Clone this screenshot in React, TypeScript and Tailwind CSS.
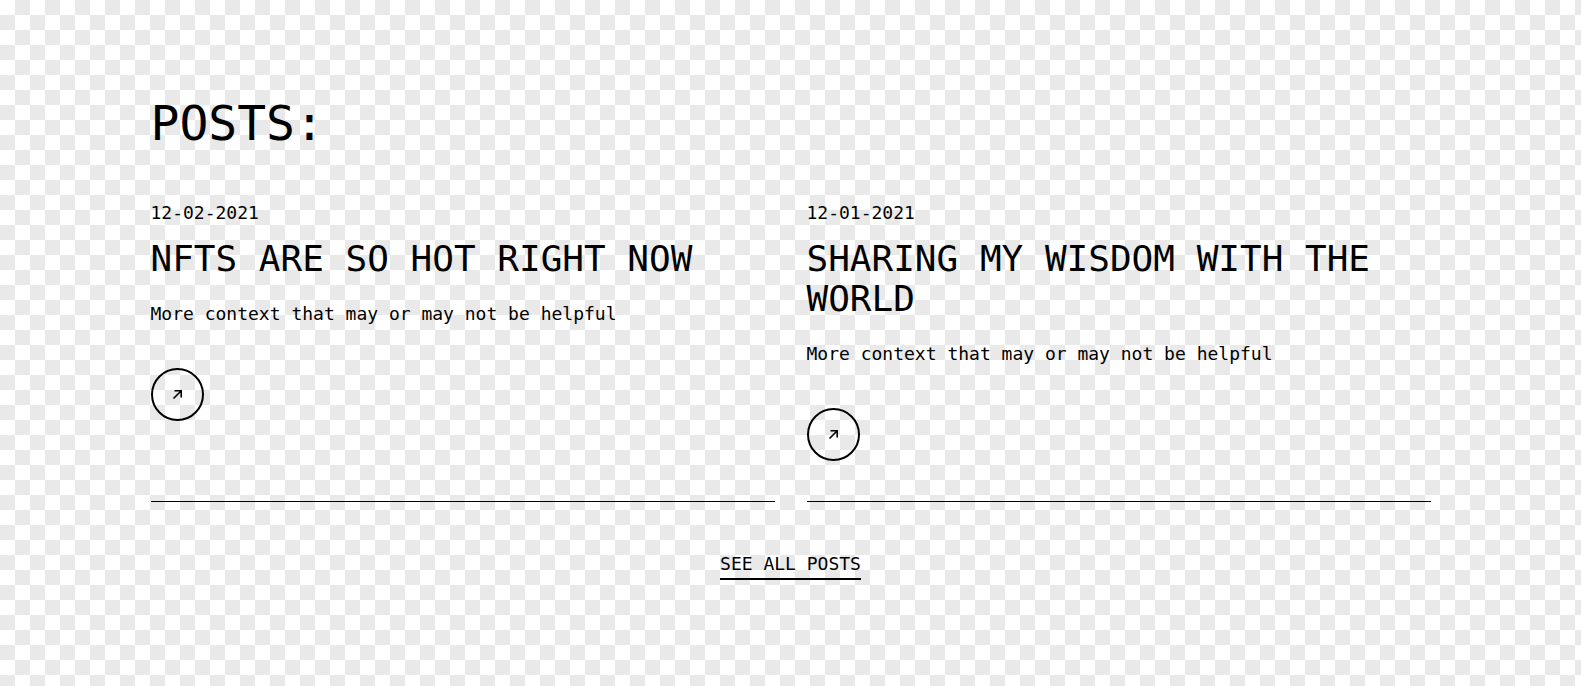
const posts = [
  {
    date: "12-02-2021",
    title: "NFTS ARE SO HOT RIGHT NOW",
    blurb: "More context that may or may not be helpful",
  },
  {
    date: "12-01-2021",
    title: "SHARING MY WISDOM WITH THE WORLD",
    blurb: "More context that may or may not be helpful",
  },
];

function ArrowIcon() {
  return (
    <svg width="11" height="11" viewBox="0 0 11 11" fill="none">
      <path
        d="M1.5 9.5 L9 2 M2.5 1.8 H9.2 V8.5"
        stroke="currentColor"
        strokeWidth="1.6"
      />
    </svg>
  );
}

export default function App() {
  return (
    <div className="min-h-screen bg-[image:conic-gradient(#e9e9e9_0_25%,#ffffff_0_50%,#e9e9e9_0_75%,#ffffff_0)] bg-[length:30px_30px] font-['DejaVu_Sans_Mono',monospace] text-black">
      <div className="max-w-[1280px] mx-auto pt-[99px]">
        <h2 className="text-5xl leading-[48px]">POSTS:</h2>

        {/* Post cards */}
        <div className="grid grid-cols-2 gap-8 mt-[52px]">
          {posts.map((post) => (
            <article key={post.date} className="border-b border-black pb-10">
              <div className="text-lg leading-7">{post.date}</div>
              <h3 className="mt-[12px] text-4xl leading-10">{post.title}</h3>
              <p className="mt-[21px] text-lg leading-7">{post.blurb}</p>
              <a
                href="#"
                className="mt-10 flex items-center justify-center w-[53px] h-[53px] rounded-full border-2 border-black"
              >
                <ArrowIcon />
              </a>
            </article>
          ))}
        </div>

        <div className="flex justify-center mt-12">
          <a href="#" className="text-lg leading-7 border-b-2 border-black">
            SEE ALL POSTS
          </a>
        </div>
      </div>
    </div>
  );
}
